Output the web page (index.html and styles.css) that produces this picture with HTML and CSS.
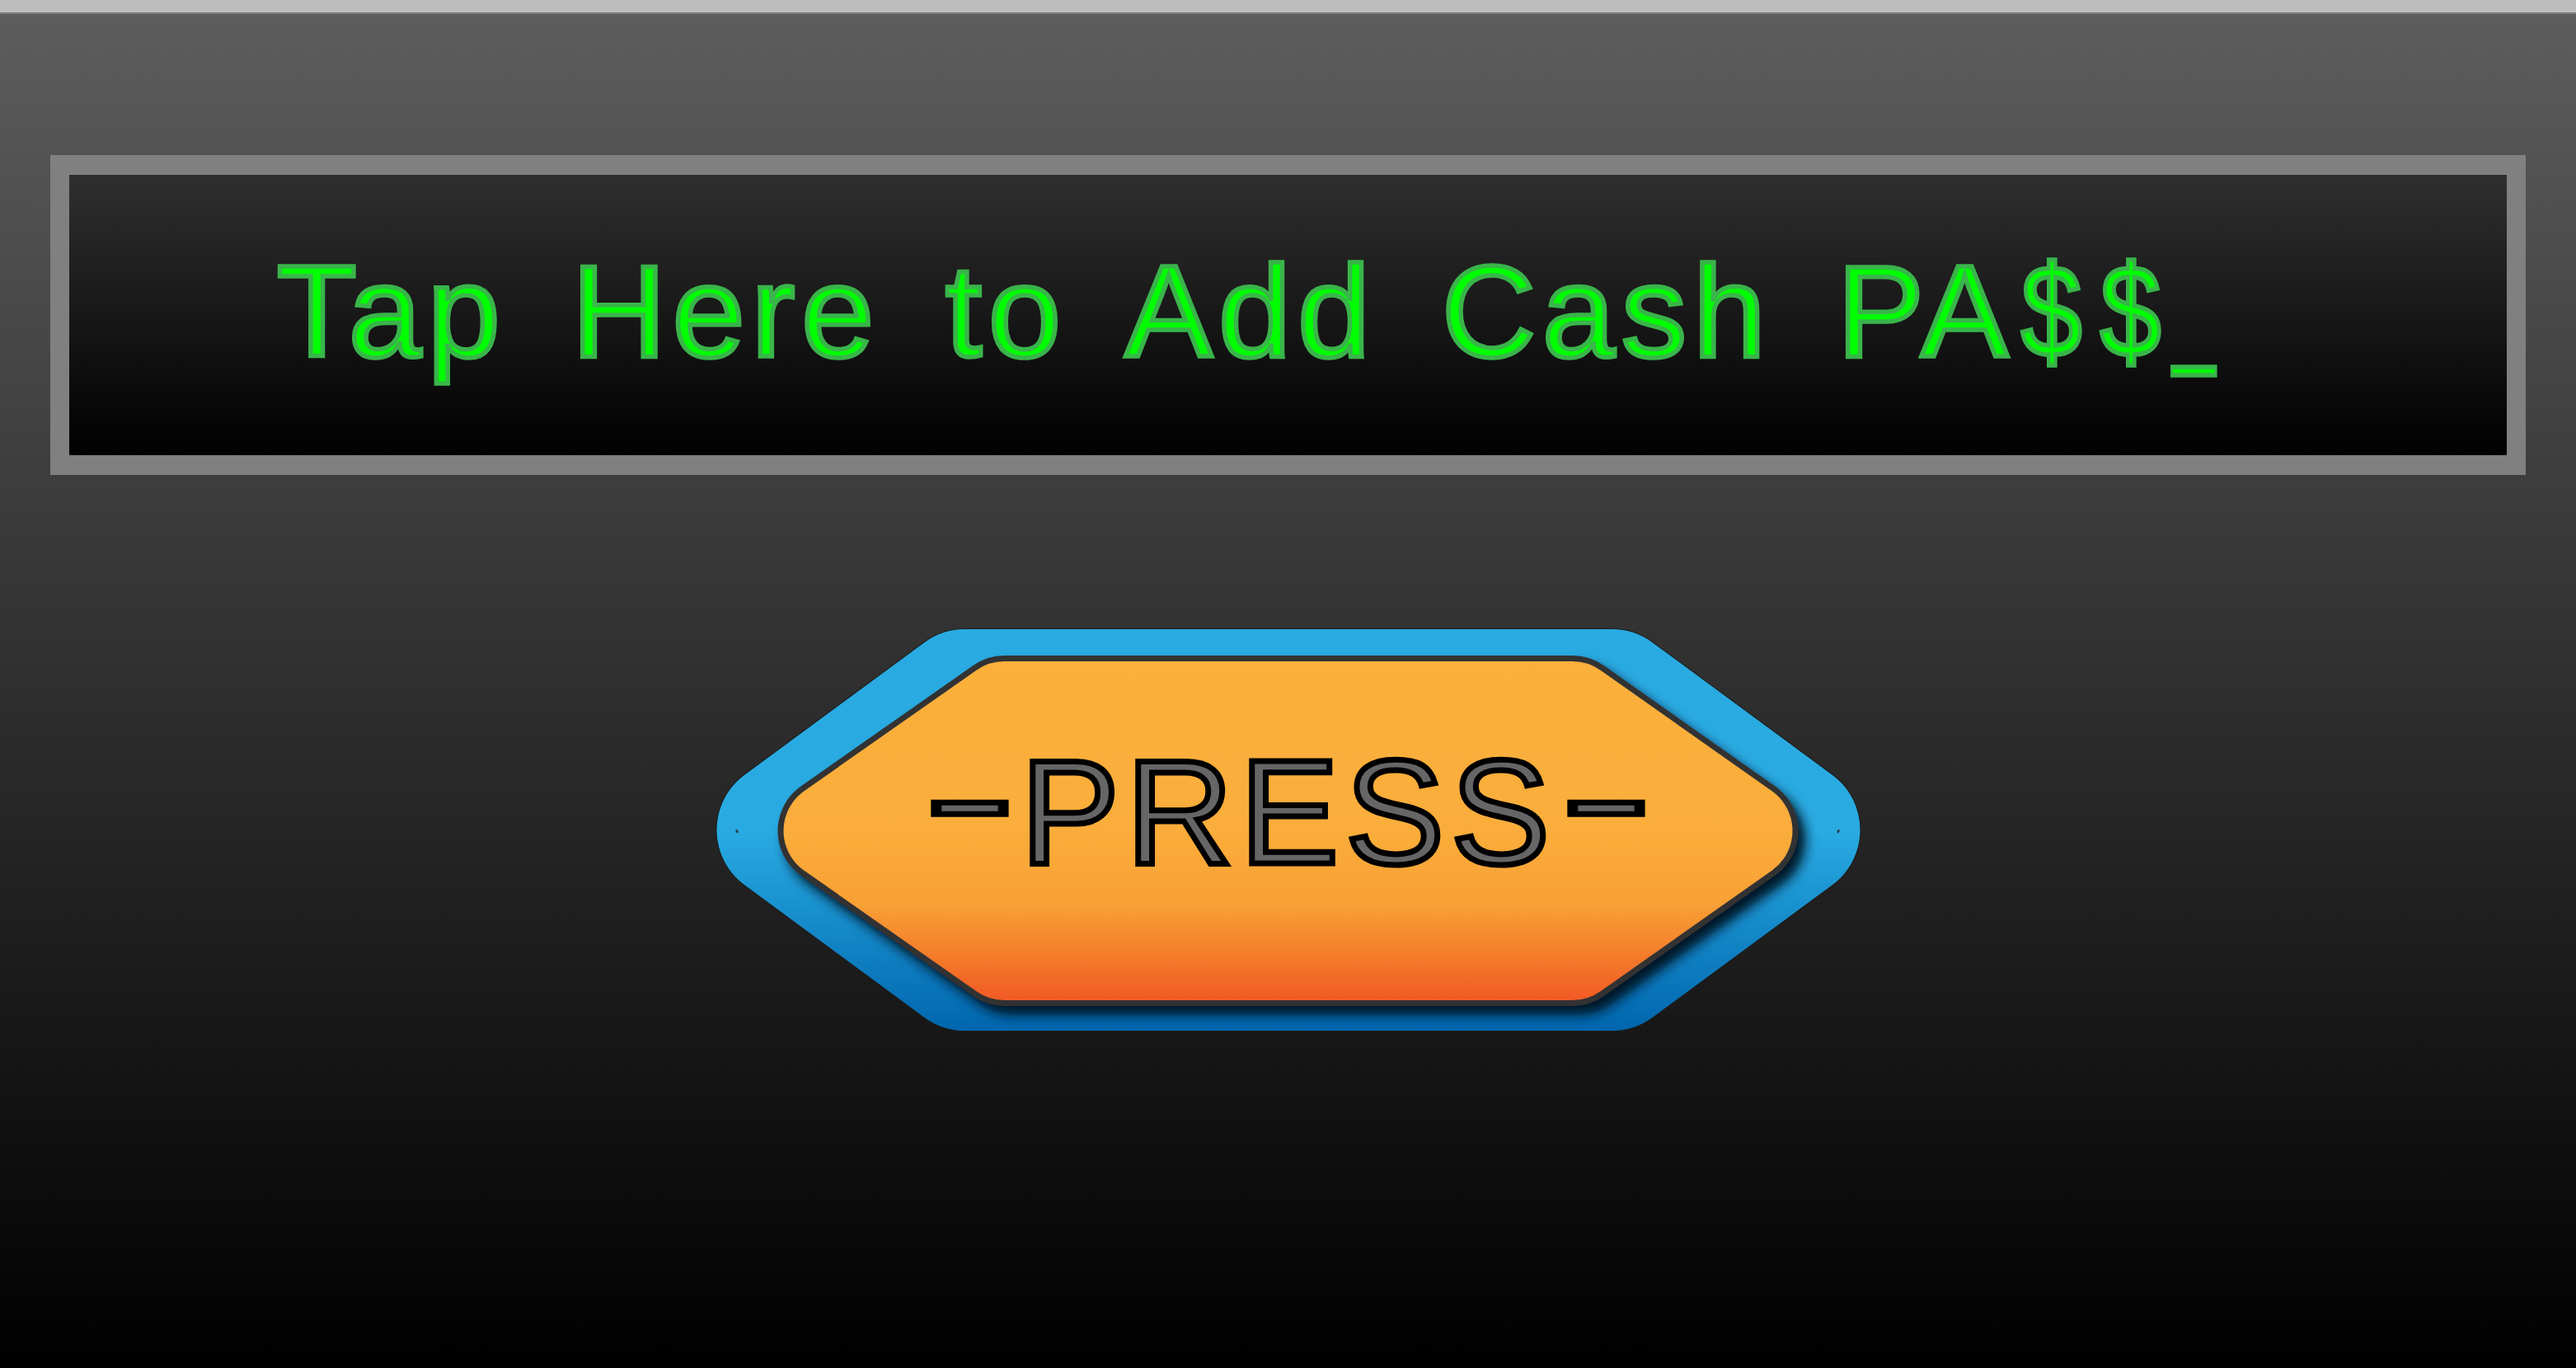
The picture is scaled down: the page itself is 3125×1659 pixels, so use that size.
FILE: index.html
```html
<!DOCTYPE html>
<html lang="en">
<head>
<meta charset="utf-8">
<title>Add Cash PA$$</title>
<link rel="stylesheet" href="styles.css">
</head>
<body>
<div class="topbar"></div>
<main class="screen">
  <section class="display">
    <p class="display-text">Tap Here to Add Cash PA<span class="narrow">$</span><span class="narrow">$</span><span class="cursor">_</span></p>
  </section>
  <div class="press">
    <svg class="press-shape" width="1400" height="500" viewBox="0 0 1400 500" aria-hidden="true">
      <defs>
        <linearGradient id="blueGrad" gradientUnits="userSpaceOnUse" x1="0" y1="6" x2="0" y2="493">
          <stop offset="0" stop-color="#29abe2"/>
          <stop offset="0.5" stop-color="#29abe2"/>
          <stop offset="1" stop-color="#0066ae"/>
        </linearGradient>
        <linearGradient id="orangeGrad" gradientUnits="userSpaceOnUse" x1="0" y1="45" x2="0" y2="456">
          <stop offset="0" stop-color="#fbb03b"/>
          <stop offset="0.5" stop-color="#faad3a"/>
          <stop offset="0.72" stop-color="#f8a035"/>
          <stop offset="0.86" stop-color="#f47e2c"/>
          <stop offset="1" stop-color="#f15a24"/>
        </linearGradient>
        <mask id="blueMask" maskUnits="userSpaceOnUse" x="0" y="0" width="1400" height="500">
          <polygon points="89.5,249.5 307.5,89 1092.5,89 1310.5,249.5 1092.5,410 307.5,410" fill="#fff" stroke="#fff" stroke-width="166" stroke-linejoin="round"/>
        </mask>
        <filter id="shadow" filterUnits="userSpaceOnUse" x="0" y="0" width="1400" height="500">
          <feDropShadow dx="9" dy="11" stdDeviation="7" flood-color="#001526" flood-opacity="1"/>
        </filter>
      </defs>
      <polygon points="89.5,249.5 307.5,89 1092.5,89 1310.5,249.5 1092.5,410 307.5,410" fill="#1c1c1c" stroke="#1c1c1c" stroke-width="168" stroke-linejoin="round"/>
      <polygon points="89.5,249.5 307.5,89 1092.5,89 1310.5,249.5 1092.5,410 307.5,410" fill="url(#blueGrad)" stroke="url(#blueGrad)" stroke-width="166" stroke-linejoin="round"/>
      <ellipse cx="31" cy="251" rx="1.4" ry="2.4" transform="rotate(-30 31 251)" fill="#2a3f4f"/>
      <ellipse cx="1367" cy="251" rx="1.4" ry="2.4" transform="rotate(30 1367 251)" fill="#2a3f4f"/>
      <g mask="url(#blueMask)">
        <g filter="url(#shadow)">
          <polygon points="146.5,250.5 355.5,104 1044.5,104 1252.5,250.5 1044.5,397 355.5,397" fill="#333333" stroke="#333333" stroke-width="132" stroke-linejoin="round"/>
          <polygon points="146.5,250.5 355.5,104 1044.5,104 1252.5,250.5 1044.5,397 355.5,397" fill="url(#orangeGrad)" stroke="url(#orangeGrad)" stroke-width="118" stroke-linejoin="round"/>
        </g>
      </g>
    </svg>
    <div class="press-label"><span class="dash">-</span><span class="word">PRESS</span><span class="dash">-</span></div>
  </div>
</main>
</body>
</html>
```

FILE: styles.css
```css
* {
  box-sizing: border-box;
}

html,
body {
  margin: 0;
  padding: 0;
}

body {
  width: 3125px;
  height: 1659px;
  overflow: hidden;
  display: flex;
  flex-direction: column;
  background: #000;
  font-family: "Liberation Sans", Arial, sans-serif;
}

.topbar {
  flex: none;
  height: 17px;
  background: #bdbdbd;
  border-bottom: 2px solid #7c7c7c;
}

.screen {
  flex: 1;
  display: flex;
  flex-direction: column;
  padding: 171px 61px 0;
  background: linear-gradient(#5d5d5d, #000000);
}

.display {
  flex: none;
  height: 388px;
  display: flex;
  align-items: center;
  padding: 0 0 10px 252px;
  border-style: solid;
  border-color: #808080;
  border-width: 24px 23px;
  background: linear-gradient(#2f2f2f, #000000);
}

.display-text {
  margin: 0;
  font-size: 158px;
  line-height: 1;
  letter-spacing: 8px;
  word-spacing: 27px;
  white-space: nowrap;
  color: #00ff00;
  -webkit-text-stroke: 5.5px #39b54a;
}

.narrow {
  display: inline-block;
  transform: scaleX(0.84);
}

.cursor {
  display: inline-block;
  transform-origin: 0 50%;
  transform: translateY(-8px) scaleX(0.58);
}

.press {
  flex: none;
  display: grid;
  width: 1400px;
  height: 500px;
  margin: 181px auto 0;
}

.press > * {
  grid-area: 1 / 1;
}

.press-shape {
  display: block;
}

.press-label {
  display: flex;
  align-items: center;
  justify-content: center;
  padding-bottom: 44px;
  font-size: 180px;
  line-height: 1;
  white-space: nowrap;
  color: #666666;
  -webkit-text-stroke: 7px #000;
}

.word {
  letter-spacing: 8px;
  margin: 0 18px 0 19px;
}

.dash {
  display: inline-block;
  width: 85px;
  text-align: center;
  transform: translateY(-19px) scaleX(1.85);
}
```
